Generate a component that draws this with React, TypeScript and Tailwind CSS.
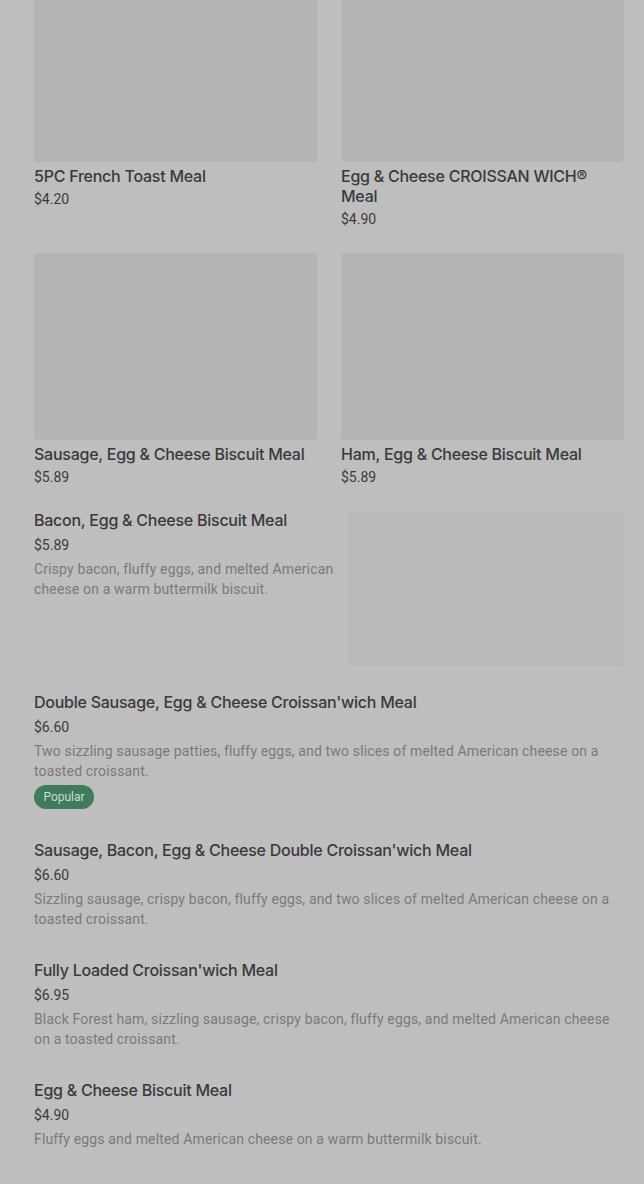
const gridItems = [
  { name: "5PC French Toast Meal", price: "$4.20" },
  { name: "Egg & Cheese CROISSAN WICH® Meal", price: "$4.90" },
  { name: "Sausage, Egg & Cheese Biscuit Meal", price: "$5.89" },
  { name: "Ham, Egg & Cheese Biscuit Meal", price: "$5.89" },
];

const listItems = [
  {
    name: "Double Sausage, Egg & Cheese Croissan'wich Meal",
    price: "$6.60",
    description:
      "Two sizzling sausage patties, fluffy eggs, and two slices of melted American cheese on a toasted croissant.",
    popular: true,
  },
  {
    name: "Sausage, Bacon, Egg & Cheese Double Croissan'wich Meal",
    price: "$6.60",
    description:
      "Sizzling sausage, crispy bacon, fluffy eggs, and two slices of melted American cheese on a toasted croissant.",
  },
  {
    name: "Fully Loaded Croissan'wich Meal",
    price: "$6.95",
    description:
      "Black Forest ham, sizzling sausage, crispy bacon, fluffy eggs, and melted American cheese on a toasted croissant.",
  },
  {
    name: "Egg & Cheese Biscuit Meal",
    price: "$4.90",
    description: "Fluffy eggs and melted American cheese on a warm buttermilk biscuit.",
  },
];

const titleCls =
  "font-['Inter','Roboto',sans-serif] text-[16px] leading-[20px] font-medium tracking-[-0.25px] text-[#3a3a3a]";
const priceCls = "text-[14px] leading-[20px] text-[#3c3c3c]";
const descCls = "text-[14px] leading-[20px] tracking-[0.15px] text-[#7a7a7a]";

const App = () => {
  return (
    <div className="min-h-[1184px] w-full overflow-hidden bg-[#bebebe] font-['Roboto','Liberation_Sans',sans-serif]">
      <div className="-mt-[25px] pl-[34px] pr-[20px]">
        {/* Grid of meals */}
        <div className="grid grid-cols-2 gap-x-[24px] gap-y-[24px]">
          {gridItems.map((item, index) => (
            <div key={index} className="flex flex-col">
              <div className="h-[187px] w-full rounded-[3px] bg-[#b4b4b4]" />
              <h3 className={`mt-[4px] ${titleCls}`}>{item.name}</h3>
              <p className={`mt-[3px] ${priceCls}`}>{item.price}</p>
            </div>
          ))}
        </div>

        {/* Featured item with image */}
        <div className="mt-[23px] flex gap-[12px]">
          <div className="flex-1">
            <h3 className={titleCls}>Bacon, Egg & Cheese Biscuit Meal</h3>
            <p className={`mt-[5px] ${priceCls}`}>$5.89</p>
            <p className={`mt-[4px] ${descCls}`}>
              Crispy bacon, fluffy eggs, and melted American cheese on a warm buttermilk biscuit.
            </p>
          </div>
          <div className="mt-[2px] h-[155px] w-[275px] shrink-0 rounded-[3px] bg-[#bababa]" />
        </div>

        {/* List items */}
        <div className="mt-[25px] flex flex-col gap-[31px]">
          {listItems.map((item, index) => (
            <div key={index} className="flex flex-col">
              <h3 className={titleCls}>{item.name}</h3>
              <p className={`mt-[5px] ${priceCls}`}>{item.price}</p>
              <p className={`mt-[4px] ${descCls}`}>{item.description}</p>
              {item.popular && (
                <span className="mt-[4px] inline-flex h-[24px] w-[60px] items-center justify-center rounded-full bg-[#3e7c5b] text-[12px] text-[#c9dcd0]">
                  Popular
                </span>
              )}
            </div>
          ))}
        </div>
      </div>
    </div>
  );
};

export default App;
